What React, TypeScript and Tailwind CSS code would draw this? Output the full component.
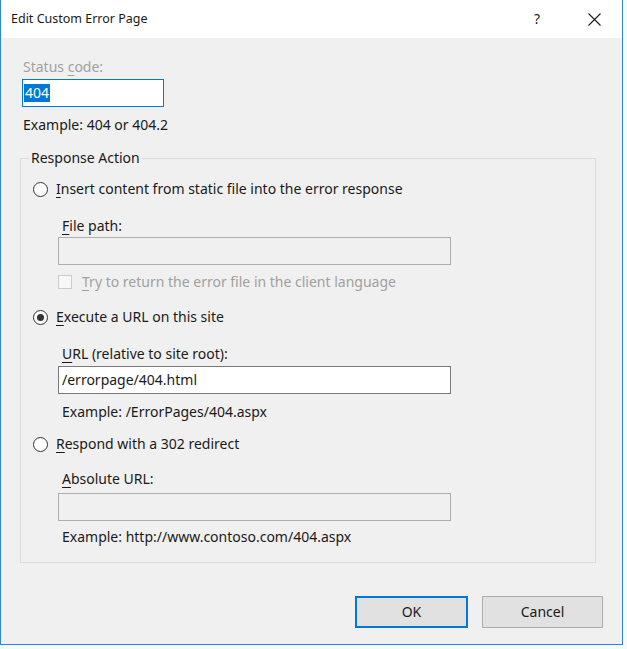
import React from "react";

const font = { fontFamily: "'Segoe UI', 'Noto Sans', 'Open Sans', sans-serif" };

const Radio = ({ checked }: { checked?: boolean }) => (
  <span className="flex h-[15px] w-[15px] shrink-0 items-center justify-center rounded-full border border-[#333333] bg-white">
    {checked && <span className="h-[7px] w-[7px] rounded-full bg-[#333333]" />}
  </span>
);

const Key = ({ children }: { children: React.ReactNode }) => (
  <span className="underline underline-offset-[3px] decoration-1">{children}</span>
);

const Field = ({ value, disabled }: { value?: string; disabled?: boolean }) => (
  <div
    className={
      "flex h-[28px] w-[393px] items-center border px-[3px] " +
      (disabled ? "border-[#adadad] bg-[#f0f0f0]" : "border-[#7a7a7a] bg-white")
    }
  >
    {value}
  </div>
);

export default function App() {
  return (
    <div className="min-h-[649px] w-[627px] bg-[#f6f9fc]" style={font}>
      <div className="flex h-[645px] w-[623px] flex-col border-x border-b border-[#2b88d8] text-[14px] leading-[18px] text-[#1a1a1a]">
        {/* title bar */}
        <div className="flex h-[38px] items-center bg-white pl-[10px] text-[12px]">
          <span className="flex-1 text-[12.5px]">Edit Custom Error Page</span>
          <span className="w-[16px] text-center text-[14px]">?</span>
          <span className="ml-[41px] mr-[20px] flex w-[16px] items-center justify-center">
            <svg width="13" height="13" viewBox="0 0 13 13" stroke="#1a1a1a" strokeWidth="1.1">
              <path d="M0.5 0.5 L12.5 12.5 M12.5 0.5 L0.5 12.5" />
            </svg>
          </span>
        </div>

        {/* body */}
        <div className="flex flex-1 flex-col bg-[#f0f0f0] pl-[19px] pr-[26px] pt-[20px]">
          <div className="pl-[3px] text-[#a0a0a0]">
            Status <Key>c</Key>ode:
          </div>
          <div className="mt-[3px] ml-[2px] flex h-[28px] w-[142px] items-center border border-[#0078d7] bg-white px-[1px]">
            <span className="bg-[#0078d7] px-[1px] text-white">404</span>
          </div>
          <div className="mt-[9px] pl-[3px]">Example: 404 or 404.2</div>

          <fieldset className="mt-[15px] border border-[#dcdcdc] pb-[16px]">
            <legend className="ml-[8px] px-[2px]">Response Action</legend>

            <div className="mt-[13px] flex items-center gap-[8px] pl-[12px]">
              <Radio />
              <span>
                <Key>I</Key>nsert content from static file into the error response
              </span>
            </div>
            <div className="ml-[37px] mt-[19px] flex flex-col">
              <span className="pl-[4px]">
                <Key>F</Key>ile path:
              </span>
              <div className="mt-[2px]">
                <Field disabled />
              </div>
              <div className="mt-[8px] flex items-center gap-[10px] text-[#a0a0a0]">
                <span className="h-[14px] w-[14px] border border-[#cccccc] bg-[#f7f7f7]" />
                <span>
                  <Key>T</Key>ry to return the error file in the client language
                </span>
              </div>
            </div>

            <div className="mt-[17px] flex items-center gap-[8px] pl-[12px]">
              <Radio checked />
              <span>
                <Key>E</Key>xecute a URL on this site
              </span>
            </div>
            <div className="ml-[37px] mt-[19px] flex flex-col">
              <span className="pl-[4px]">
                <Key>U</Key>RL (relative to site root):
              </span>
              <div className="mt-[3px]">
                <Field value="/errorpage/404.html" />
              </div>
              <span className="mt-[9px] pl-[4px]">Example: /ErrorPages/404.aspx</span>
            </div>

            <div className="mt-[14px] flex items-center gap-[8px] pl-[12px]">
              <Radio />
              <span>
                <Key>R</Key>espond with a 302 redirect
              </span>
            </div>
            <div className="ml-[37px] mt-[17px] flex flex-col">
              <span className="pl-[4px]">
                <Key>A</Key>bsolute URL:
              </span>
              <div className="mt-[5px]">
                <Field disabled />
              </div>
              <span className="mt-[7px] pl-[4px]">Example: http://www.contoso.com/404.aspx</span>
            </div>
          </fieldset>

          <div className="-mr-[7px] mt-[33px] flex justify-end gap-[14px]">
            <button className="h-[32px] w-[113px] border-2 border-[#0078d7] bg-[#e1e1e1]">OK</button>
            <button className="h-[32px] w-[121px] border border-[#adadad] bg-[#e1e1e1]">Cancel</button>
          </div>
        </div>
      </div>
    </div>
  );
}
